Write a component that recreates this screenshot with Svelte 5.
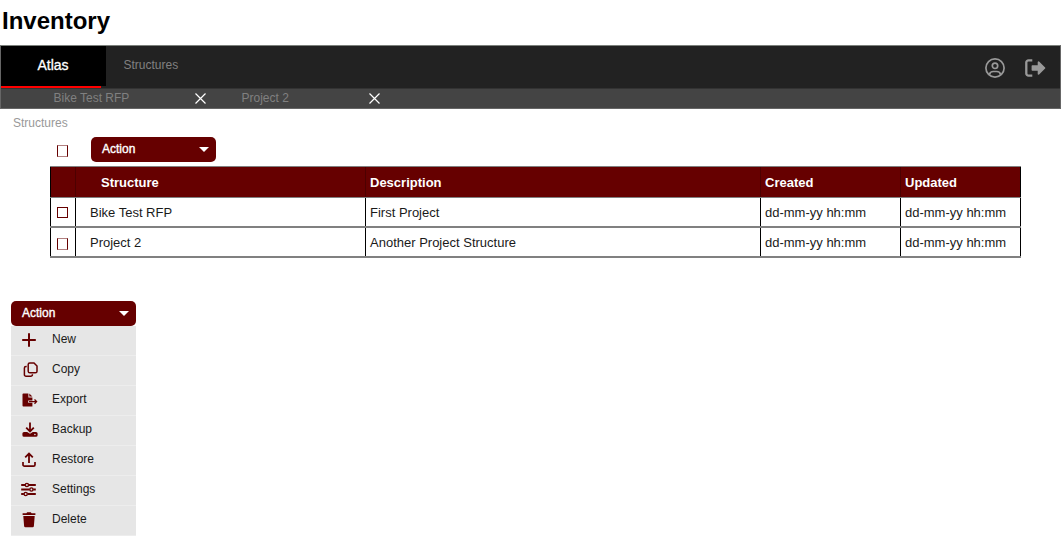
<script>
  const columns = ['Structure', 'Description', 'Created', 'Updated'];
  const rows = [
    ['Bike Test RFP', 'First Project', 'dd-mm-yy hh:mm', 'dd-mm-yy hh:mm'],
    ['Project 2', 'Another Project Structure', 'dd-mm-yy hh:mm', 'dd-mm-yy hh:mm']
  ];
  const actions = ['New', 'Copy', 'Export', 'Backup', 'Restore', 'Settings', 'Delete'];
</script>

{#snippet close()}
  <svg class="close" width="11" height="11" viewBox="0 0 11 11"><path d="M.5 .5 10.5 10.5M10.5 .5 .5 10.5" stroke="#fff" stroke-width="1.2" /></svg>
{/snippet}

{#snippet actionButton()}
  <button class="action">
    <span>Action</span>
    <svg width="10" height="5" viewBox="0 0 10 5"><path d="M0 0H10L5 5Z" fill="#fff" /></svg>
  </button>
{/snippet}

{#snippet icon(name)}
  <svg class="icon" width="20" height="20" viewBox="0 0 20 20" fill="none" stroke="#600" stroke-width="1.6">
    {#if name === 'New'}
      <path d="M2.2 10H15.8M9 3.3V16.7" stroke-width="2" />
    {:else if name === 'Copy'}
      <path d="M9.8 3h4.2l3 3v5.2a1.6 1.6 0 0 1-1.6 1.6H9.8a1.6 1.6 0 0 1-1.6-1.6V4.6A1.6 1.6 0 0 1 9.8 3Z" stroke-width="1.5" />
      <path d="M6.7 6.5H6a1.6 1.6 0 0 0-1.6 1.6v6.6A1.6 1.6 0 0 0 6 16.3h4.8a1.6 1.6 0 0 0 1.6-1.6v-.5" stroke-width="1.5" />
    {:else if name === 'Export'}
      <path d="M3.4 3.4h5v4h4v3.1H8.2v2.2h4.2v3.7h-9a.9.9 0 0 1-.9-.9V4.3a.9.9 0 0 1 .9-.9ZM9.3 3.4l3.1 3.1H9.3Z" fill="#600" stroke="none" />
      <path d="M9 11.6h7.5M14.5 9.5l2.1 2.1-2.1 2.1" stroke-width="1.3" />
    {:else if name === 'Backup'}
      <path d="M10 2.5V11M6.2 7.6 10 11.4l3.8-3.8" stroke-width="1.8" />
      <path d="M4 12h3.2l2.8 1.8 2.8-1.8H16a1.6 1.6 0 0 1 1.6 1.6v1.6a1.6 1.6 0 0 1-1.6 1.6H4a1.6 1.6 0 0 1-1.6-1.6v-1.6A1.6 1.6 0 0 1 4 12Z" fill="#600" stroke="none" />
      <circle cx="14.9" cy="14.5" r=".8" fill="#e6e6e6" stroke="none" />
    {:else if name === 'Restore'}
      <path d="M9 13V3.8M5.2 7.3 9 3.5l3.8 3.8" stroke-width="1.8" />
      <path d="M3 12v2.7A1.5 1.5 0 0 0 4.5 16.2h9a1.5 1.5 0 0 0 1.5-1.5V12" stroke-width="1.7" />
    {:else if name === 'Settings'}
      <path d="M1.2 5H5M8.8 5h7M1.2 9.5h8.4M13.2 9.5h2.6M1.2 14h2.7M7.5 14h8.3" stroke-width="1.8" />
      <circle cx="6.9" cy="5" r="1.6" stroke-width="1.4" /><circle cx="11.4" cy="9.5" r="1.6" stroke-width="1.4" /><circle cx="5.7" cy="14" r="1.6" stroke-width="1.4" />
    {:else}
      <path d="M2.6 3.3h3.8l.8-1h3.6l.8 1h3.8v1.6H2.6ZM3.3 5.9h11.4l-.8 10.2a1.3 1.3 0 0 1-1.3 1.2H5.4a1.3 1.3 0 0 1-1.3-1.2Z" fill="#600" stroke="none" />
    {/if}
  </svg>
{/snippet}

<main>
  <h1>Inventory</h1>
  <header>
    <nav class="primary">
      <div class="brand"><span>Atlas</span></div>
      <div class="section">Structures</div>
      <svg class="user" width="20" height="20" viewBox="0 0 20 20" fill="none" stroke="#999" stroke-width="1.7">
        <circle cx="10" cy="10" r="9.1" /><circle cx="10" cy="7.8" r="2.7" />
        <path d="M4.4 16.6c.5-2.2 2-3.1 3.8-3.1h3.6c1.8 0 3.3.9 3.8 3.1" />
      </svg>
      <svg class="logout" width="21" height="18" viewBox="0 0 21 18">
        <path d="M7.3 1.3H3.5A2.2 2.2 0 0 0 1.3 3.5v11a2.2 2.2 0 0 0 2.2 2.2h3.8" fill="none" stroke="#999" stroke-width="2.3" />
        <path d="M7.3 6.2h5.4V3.1a.8.8 0 0 1 1.4-.5l6 5.8a.8.8 0 0 1 0 1.2l-6 5.8a.8.8 0 0 1-1.4-.5v-3.1H7.3a.7.7 0 0 1-.7-.7V6.9a.7.7 0 0 1 .7-.7Z" fill="#999" />
      </svg>
    </nav>
    <nav class="tabs">
      <div class="tab first"><span>Bike Test RFP</span>{@render close()}</div>
      <div class="tab second"><span>Project 2</span>{@render close()}</div>
    </nav>
  </header>
  <div class="crumb">Structures</div>
  <div class="toolbar"><i class="box soft"></i>{@render actionButton()}</div>
  <div class="table">
    <div class="row head">
      <b class="pick"></b>
      {#each columns as column}<b>{column}</b>{/each}
    </div>
    {#each rows as row, i}
      <div class="row">
        <div class="pick"><i class="box" class:soft={i === 1}></i></div>
        {#each row as cell}<div>{cell}</div>{/each}
      </div>
    {/each}
  </div>
  <section class="menu">
    {@render actionButton()}
    <ul>
      {#each actions as name}<li>{@render icon(name)}<span>{name}</span></li>{/each}
    </ul>
  </section>
</main>

<style>
  :global(body) { background: #fff; overflow: hidden; }
  main { width: 1061px; height: 537px; overflow: hidden; font: 12px/14px "Liberation Sans", Arial, sans-serif; color: #1a1a1a; }
  svg { display: block; flex: none; }
  h1 { margin: 0; height: 45px; box-sizing: border-box; padding: 7px 0 0 2px; font-size: 24px; line-height: 28px; color: #000; }
  header { box-sizing: border-box; height: 64px; border: 1px solid #666; border-top-color: #7b807b; background: #444; }
  .primary { display: flex; height: 42px; background: #222; border-bottom: 1px solid #333; }
  .brand { width: 105px; height: 42px; box-sizing: border-box; background: linear-gradient(#f00, #f00) 0 100% / 100px 2px no-repeat, linear-gradient(#000, #000) 0 0 / 105px 40px no-repeat; padding: 11px 0 0 36.5px; color: #fff; font-size: 14px; line-height: 16px; -webkit-text-stroke: .3px #fff; }
  .section { width: 878px; box-sizing: border-box; padding: 12px 0 0 17.5px; color: #808080; }
  .user { margin: 12px 0 0 1px; }
  .logout { margin: 13px 0 0 20px; }
  .tabs { display: flex; height: 19px; color: #808080; }
  .tab { display: flex; justify-content: space-between; align-items: flex-start; padding-top: 2px; }
  .first { width: 152.5px; margin-left: 52.5px; }
  .second { width: 138.5px; margin-left: 35.5px; }
  .close { margin-top: 2px; }
  .crumb { padding: 7px 0 0 13px; color: #999; height: 21px; }
  .toolbar { display: flex; padding-left: 57px; height: 29px; }
  .box { display: block; width: 11px; height: 11px; box-sizing: border-box; border: 1px solid #600; }
  .box.soft { height: 12px; border-top-color: #b28080; border-bottom-color: #b28080; }
  .toolbar .box { margin: 8px 22.5px 0 0; }
  .action { display: flex; justify-content: space-between; width: 125px; height: 25px; box-sizing: border-box; border: 0; border-radius: 5px; background: #600; color: #fff; padding: 5px 7px 0 11.5px; font: 12px/14px "Liberation Sans", Arial, sans-serif; -webkit-text-stroke: .35px #fff; align-items: flex-start; }
  .action svg { margin-top: 5px; }
  .table { width: 971px; margin-left: 50px; border-top: 1px solid #808080; box-sizing: border-box; font-size: 13px; line-height: 15px; }
  .row { display: grid; grid-template-columns: 26px 290px 395px 140px 120px; height: 28px; border-bottom: 2px solid #808080; }
  .row > * { border-right: 1px solid #000; padding: 7px 0 0 4px; }
  .row > .pick { border-left: 1px solid #000; padding: 9px 0 0 6px; }
  .row > .pick:has(.soft) { padding-top: 10px; }
  .row > :nth-child(2) { padding-left: 14px; }
  .head { height: 30px; border-bottom-width: 1px; background: #600; color: #fff; }
  .head > *, .head > .pick { border-right-color: #4d0000; padding-top: 8px; }
  .head > :last-child { border-right-color: #000; }
  .head > :nth-child(2) { padding-left: 25px; }
  .menu { margin: 42.5px 0 0 10.5px; width: 125px; }
  .menu .action { height: 25.5px; padding-top: 5.5px; }
  ul { list-style: none; margin: 0; padding: 0; background: #e6e6e6; }
  li { display: flex; height: 29px; border-bottom: 1px solid #ededed; }
  .icon { margin: 4px 0 0 9.5px; }
  li span { margin: 6px 0 0 12px; }
</style>
